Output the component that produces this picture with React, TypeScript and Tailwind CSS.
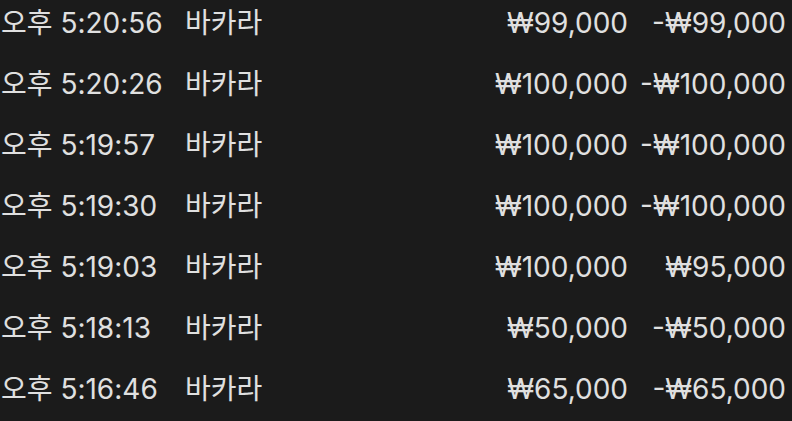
const rows = [
  { time: '오후 5:20:56', game: '바카라', bet: '₩99,000', result: '-₩99,000' },
  { time: '오후 5:20:26', game: '바카라', bet: '₩100,000', result: '-₩100,000' },
  { time: '오후 5:19:57', game: '바카라', bet: '₩100,000', result: '-₩100,000' },
  { time: '오후 5:19:30', game: '바카라', bet: '₩100,000', result: '-₩100,000' },
  { time: '오후 5:19:03', game: '바카라', bet: '₩100,000', result: '₩95,000' },
  { time: '오후 5:18:13', game: '바카라', bet: '₩50,000', result: '-₩50,000' },
  { time: '오후 5:16:46', game: '바카라', bet: '₩65,000', result: '-₩65,000' },
];

export default function App() {
  return (
    <div className="w-[792px] h-[421px] overflow-hidden bg-[#1b1b1b] text-[#e0e0e0] font-['Inter','Noto_Sans_CJK_KR',sans-serif] text-[28px] leading-none">
      <div className="-mt-[8px] flex flex-col">
        {rows.map((r, i) => (
          <div key={i} className="flex items-center h-[61px] pl-[1px] pr-[6px]">
            <span className="w-[184px] shrink-0">{r.time}</span>
            <span className="flex-1">{r.game}</span>
            <span className="text-right">{r.bet}</span>
            <span className="w-[158px] text-right">{r.result}</span>
          </div>
        ))}
      </div>
    </div>
  );
}
